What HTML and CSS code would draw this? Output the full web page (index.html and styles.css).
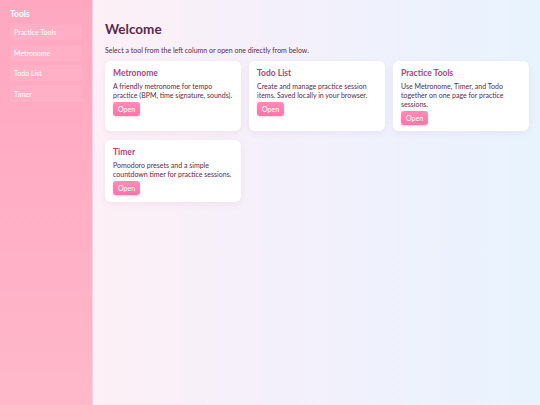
FILE: index.html
```html
<!DOCTYPE html>
<html lang="en">
<head>
<meta charset="utf-8">
<title>Welcome</title>
<link rel="stylesheet" href="styles.css">
</head>
<body>
<div class="app">
  <aside class="sidebar">
    <div class="side-title">Tools</div>
    <nav class="side-nav">
      <a class="side-item">Practice Tools</a>
      <a class="side-item">Metronome</a>
      <a class="side-item">Todo List</a>
      <a class="side-item">Timer</a>
    </nav>
  </aside>
  <main class="main">
    <h1 class="title">Welcome</h1>
    <p class="lead">Select a tool from the left column or open one directly from below.</p>
    <div class="grid">
      <section class="card">
        <h2 class="card-title">Metronome</h2>
        <p class="card-text">A friendly metronome for tempo practice (BPM, time signature, sounds).</p>
        <button class="btn">Open</button>
      </section>
      <section class="card">
        <h2 class="card-title">Todo List</h2>
        <p class="card-text">Create and manage practice session items. Saved locally in your browser.</p>
        <button class="btn">Open</button>
      </section>
      <section class="card">
        <h2 class="card-title">Practice Tools</h2>
        <p class="card-text">Use Metronome, Timer, and Todo together on one page for practice sessions.</p>
        <button class="btn">Open</button>
      </section>
      <section class="card">
        <h2 class="card-title">Timer</h2>
        <p class="card-text">Pomodoro presets and a simple countdown timer for practice sessions.</p>
        <button class="btn">Open</button>
      </section>
    </div>
  </main>
</div>
</body>
</html>
```

FILE: styles.css
```css
* { box-sizing: border-box; }
html, body { margin: 0; padding: 0; height: 100%; }
body {
  font-family: "Lato", "Open Sans", sans-serif;
  color: #5a2a48;
}
.app {
  display: flex;
  height: 405px;
}
.sidebar {
  width: 93px;
  flex: none;
  background: linear-gradient(180deg, #ffa7c1 0%, #ffb0c6 60%, #ffb8c9 100%);
  border-right: 1px solid #ffd0dc;
  padding: 9px 10px;
}
.side-title {
  color: #fff;
  font-weight: 700;
  font-size: 8.5px;
  line-height: 11px;
  margin-bottom: 4px;
}
.side-nav {
  display: flex;
  flex-direction: column;
  gap: 4.5px;
}
.side-item {
  display: block;
  height: 16px;
  line-height: 16px;
  padding: 0 4px;
  border-radius: 3px;
  background: rgba(255,255,255,0.07);
  color: #fff;
  font-size: 7px;
}
.main {
  flex: 1;
  background: linear-gradient(90deg, #fdf0f6 0%, #f4f0fb 40%, #e8f3fe 100%);
  padding: 18px 12px 0 12px;
}
.title {
  margin: 0;
  font-size: 13.5px;
  line-height: 22px;
  font-weight: 700;
  color: #5a2a48;
}
.lead {
  margin: 5px 0 6px;
  font-size: 7px;
  line-height: 10px;
}
.grid {
  display: grid;
  grid-template-columns: repeat(3, 136px);
  column-gap: 8px;
  row-gap: 9px;
}
.card {
  display: flex;
  flex-direction: column;
  align-items: flex-start;
  background: #fff;
  border-radius: 6px;
  padding: 7px 8px 6.5px;
  box-shadow: 0 2px 6px rgba(190, 120, 160, 0.12);
}
.card-title {
  margin: 0 0 3px;
  font-size: 8.5px;
  line-height: 11px;
  font-weight: 700;
  color: #b8407a;
}
.card-text {
  margin: 0 0 2.5px;
  font-size: 7px;
  line-height: 8.75px;
}
.btn {
  border: none;
  border-radius: 3px;
  background: linear-gradient(180deg, #ff8db6, #ff75a8);
  color: #fff;
  font-family: inherit;
  font-size: 7px;
  height: 14px;
  padding: 0 5px;
  box-shadow: 0 1px 2px rgba(255, 90, 150, 0.3);
}
```
